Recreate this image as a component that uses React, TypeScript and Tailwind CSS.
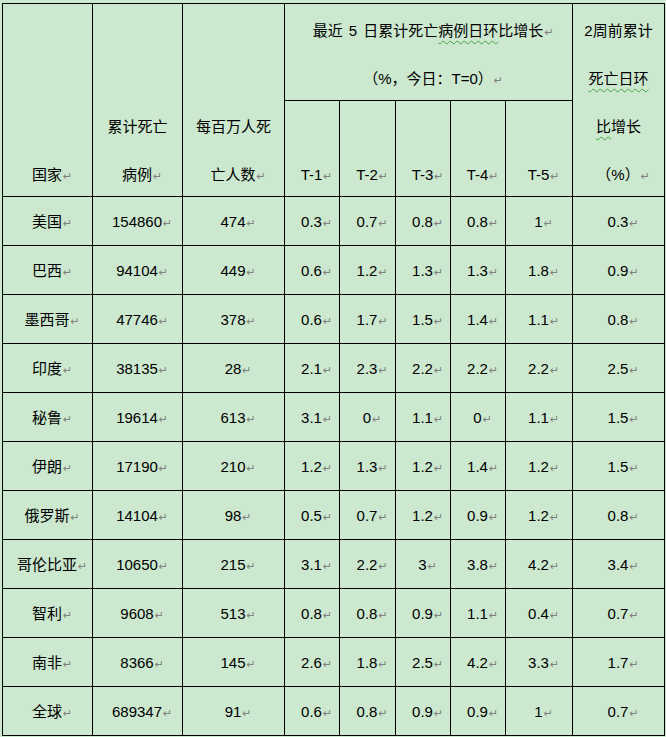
import React from "react";

const BG = "bg-[#cce8cf]";

function Mark() {
  return (
    <span className="inline-block w-0 overflow-visible whitespace-nowrap font-['DejaVu_Sans',sans-serif] text-[11px] text-[#808080] pl-[1px]">
      ↵
    </span>
  );
}

function Line({ children }: { children: React.ReactNode }) {
  return <div className="h-[48px] leading-[48px] whitespace-nowrap pt-[3px]">{children}</div>;
}

function Wavy({ children }: { children: React.ReactNode }) {
  return (
    <span className="underline decoration-wavy decoration-[#3aa83a] decoration-1 underline-offset-[4px]">
      {children}
    </span>
  );
}

const rows: string[][] = [
  ["美国", "154860", "474", "0.3", "0.7", "0.8", "0.8", "1", "0.3"],
  ["巴西", "94104", "449", "0.6", "1.2", "1.3", "1.3", "1.8", "0.9"],
  ["墨西哥", "47746", "378", "0.6", "1.7", "1.5", "1.4", "1.1", "0.8"],
  ["印度", "38135", "28", "2.1", "2.3", "2.2", "2.2", "2.2", "2.5"],
  ["秘鲁", "19614", "613", "3.1", "0", "1.1", "0", "1.1", "1.5"],
  ["伊朗", "17190", "210", "1.2", "1.3", "1.2", "1.4", "1.2", "1.5"],
  ["俄罗斯", "14104", "98", "0.5", "0.7", "1.2", "0.9", "1.2", "0.8"],
  ["哥伦比亚", "10650", "215", "3.1", "2.2", "3", "3.8", "4.2", "3.4"],
  ["智利", "9608", "513", "0.8", "0.8", "0.9", "1.1", "0.4", "0.7"],
  ["南非", "8366", "145", "2.6", "1.8", "2.5", "4.2", "3.3", "1.7"],
  ["全球", "689347", "91", "0.6", "0.8", "0.9", "0.9", "1", "0.7"],
];

export default function App() {
  const head = `${BG} flex flex-col justify-end items-center`;
  return (
    <div className={`w-[666px] h-[737px] ${BG} pt-[3px] pl-[2px] text-black text-[15px] font-['Liberation_Sans','Noto_Sans_CJK_SC',sans-serif]`}>
      <div className="inline-grid bg-black gap-px p-px grid-cols-[89px_89px_101px_54px_55px_54px_54px_66px_91px] grid-rows-[96px_95px_repeat(11,48px)]">
        <div className={`row-span-2 ${head}`}>
          <Line>
            国家
            <Mark />
          </Line>
        </div>
        <div className={`row-span-2 ${head}`}>
          <Line>累计死亡</Line>
          <Line>
            病例
            <Mark />
          </Line>
        </div>
        <div className={`row-span-2 ${head}`}>
          <Line>每百万人死</Line>
          <Line>
            亡人数
            <Mark />
          </Line>
        </div>
        <div className={`col-span-5 ${head}`}>
          <Line>
            最近<span className="px-[2px]"> 5 </span>日累计死亡<Wavy>病例日环</Wavy>比增长
            <Mark />
          </Line>
          <Line>
            （%，今日：T=0）
            <Mark />
          </Line>
        </div>
        <div className={`row-span-2 ${head}`}>
          <Line>2周前累计</Line>
          <Line>
            <Wavy>死亡日环</Wavy>
          </Line>
          <Line>
            <Wavy>比</Wavy>增长
          </Line>
          <Line>
            （%）
            <Mark />
          </Line>
        </div>
        {["T-1", "T-2", "T-3", "T-4", "T-5"].map((t) => (
          <div key={t} className={head}>
            <Line>
              {t}
              <Mark />
            </Line>
          </div>
        ))}
        {rows.map((r) =>
          r.map((c, i) => (
            <div
              key={r[0] + i}
              className={`${BG} flex items-center justify-center pt-[4px] leading-[20px] whitespace-nowrap`}
            >
              <span>
                {c}
                <Mark />
              </span>
            </div>
          ))
        )}
      </div>
    </div>
  );
}
